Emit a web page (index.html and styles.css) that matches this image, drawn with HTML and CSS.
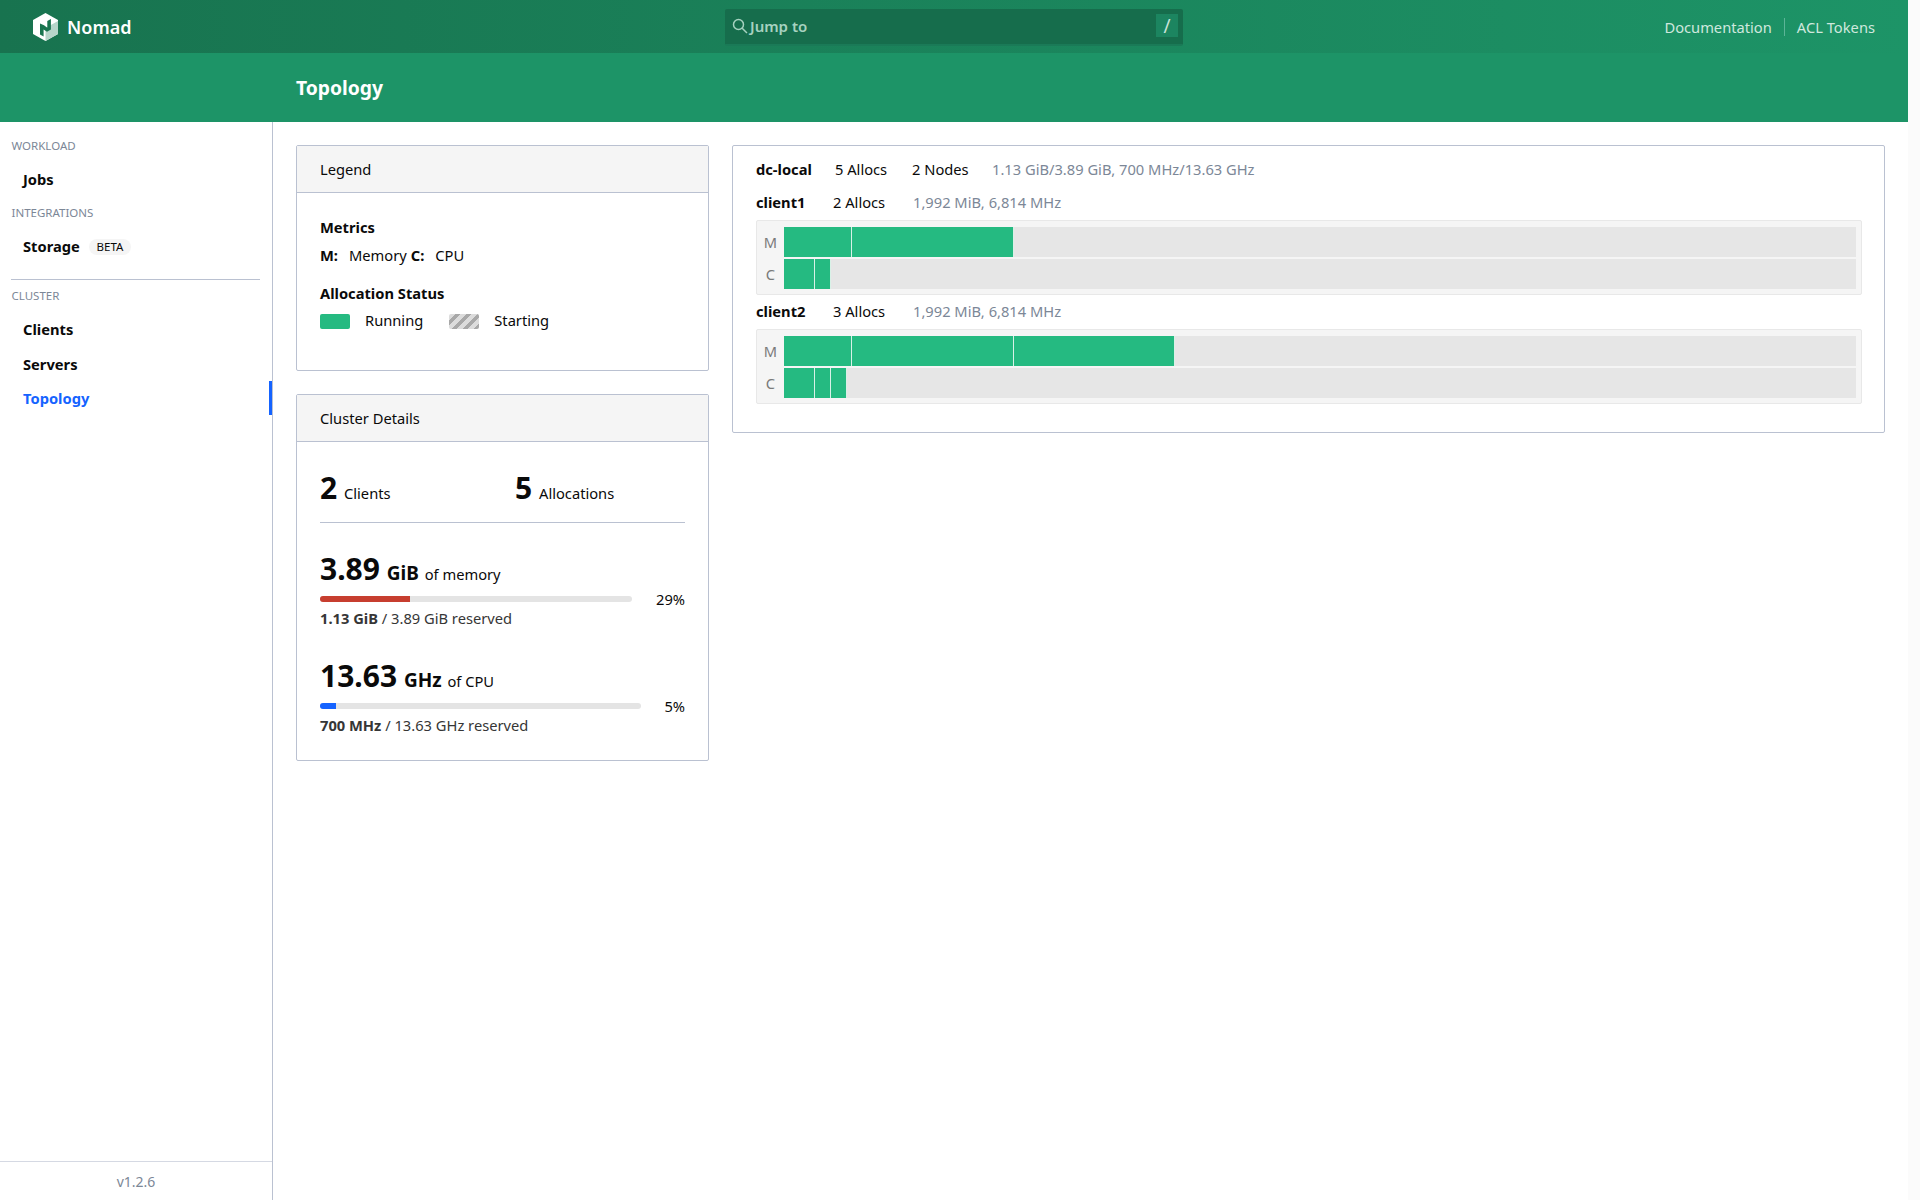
FILE: index.html
```html
<!DOCTYPE html>
<html lang="en">
<head>
    <meta charset="UTF-8">
    <title>Topology - Nomad</title>
    <link rel="stylesheet" href="styles.css">
</head>
<body>
<div class="page">
    <nav class="navbar">
        <a class="brand">
            <svg class="logo" viewBox="0 0 25 28" width="25" height="28">
                <path fill="#fff" d="M12.5 0 25 7v14l-12.5 7L0 21V7z"/>
                <path fill="#b7d5ca" d="M12.5 28V15L25 8v13z"/>
                <path fill="#19744f" d="M7 10.5v11l3.6 2.1v-7.2l3.4 2.4 3.9-2.2V6l-3.6 2.1v6.6l-3.3-2.4z"/>
            </svg>
            <span class="brand-name">Nomad</span>
        </a>
        <div class="search">
            <svg class="search-icon" viewBox="0 0 16 16" width="16" height="16">
                <circle cx="6.5" cy="6.5" r="5" fill="none" stroke="currentColor" stroke-width="1.5"/>
                <path d="M10.2 10.2 15 15" stroke="currentColor" stroke-width="1.5"/>
            </svg>
            <span class="search-text">Jump to</span>
            <span class="search-key">/</span>
        </div>
        <div class="nav-links">
            <a class="nav-link">Documentation</a>
            <a class="nav-link">ACL Tokens</a>
        </div>
    </nav>
    <header class="subnav">
        <h1>Topology</h1>
    </header>
    <div class="content">
        <aside class="sidebar">
            <p class="menu-label">WORKLOAD</p>
            <ul class="menu-list">
                <li class="menu-item">Jobs</li>
            </ul>
            <p class="menu-label">INTEGRATIONS</p>
            <ul class="menu-list">
                <li class="menu-item">Storage <span class="beta">BETA</span></li>
            </ul>
            <hr class="menu-divider">
            <p class="menu-label">CLUSTER</p>
            <ul class="menu-list">
                <li class="menu-item">Clients</li>
                <li class="menu-item">Servers</li>
                <li class="menu-item active">Topology</li>
            </ul>
            <div class="version">v1.2.6</div>
        </aside>
        <main class="main">
            <div class="left-col">
                <section class="card">
                    <div class="card-head">Legend</div>
                    <div class="legend-body">
                        <h3>Metrics</h3>
                        <div class="legend-metrics">
                            <strong>M:</strong><span class="metric-name">Memory</span>
                            <strong>C:</strong><span class="metric-name">CPU</span>
                        </div>
                        <h3 class="status-title">Allocation Status</h3>
                        <div class="legend-status">
                            <span class="swatch running"></span><span class="status-name">Running</span>
                            <span class="swatch starting"></span><span class="status-name">Starting</span>
                        </div>
                    </div>
                </section>
                <section class="card">
                    <div class="card-head">Cluster Details</div>
                    <div class="details-body">
                        <div class="counts">
                            <div class="count first"><b>2</b> Clients</div>
                            <div class="count"><b>5</b> Allocations</div>
                        </div>
                        <div class="resource">
                            <h2><b>3.89</b> <em>GiB</em> of memory</h2>
                            <div class="meter-row">
                                <div class="meter meter-mem"><div class="meter-fill red" style="width: 29%"></div></div>
                                <span>29%</span>
                            </div>
                            <p><strong>1.13 GiB</strong> / 3.89 GiB reserved</p>
                        </div>
                        <div class="resource">
                            <h2><b>13.63</b> <em>GHz</em> of CPU</h2>
                            <div class="meter-row">
                                <div class="meter meter-cpu"><div class="meter-fill blue" style="width: 5%"></div></div>
                                <span>5%</span>
                            </div>
                            <p><strong>700 MHz</strong> / 13.63 GHz reserved</p>
                        </div>
                    </div>
                </section>
            </div>
            <section class="card topo">
                <div class="topo-line dc">
                    <strong class="dc-name">dc-local</strong>
                    <span class="dc-allocs">5 Allocs</span>
                    <span class="dc-nodes">2 Nodes</span>
                    <span class="muted">1.13 GiB/3.89 GiB, 700 MHz/13.63 GHz</span>
                </div>
                <div class="topo-line">
                    <strong class="node-name">client1</strong>
                    <span class="node-allocs">2 Allocs</span>
                    <span class="muted">1,992 MiB, 6,814 MHz</span>
                </div>
                <div class="chart">
                    <div class="chart-row">
                        <span class="chart-label">M</span>
                        <div class="track">
                            <div class="alloc" style="width: 6.36%"></div>
                            <div class="alloc" style="width: 15.08%"></div>
                        </div>
                    </div>
                    <div class="chart-row">
                        <span class="chart-label">C</span>
                        <div class="track">
                            <div class="alloc" style="width: 2.85%"></div>
                            <div class="alloc" style="width: 1.5%"></div>
                        </div>
                    </div>
                </div>
                <div class="topo-line">
                    <strong class="node-name">client2</strong>
                    <span class="node-allocs">3 Allocs</span>
                    <span class="muted">1,992 MiB, 6,814 MHz</span>
                </div>
                <div class="chart">
                    <div class="chart-row">
                        <span class="chart-label">M</span>
                        <div class="track">
                            <div class="alloc" style="width: 6.36%"></div>
                            <div class="alloc" style="width: 15.08%"></div>
                            <div class="alloc" style="width: 15.08%"></div>
                        </div>
                    </div>
                    <div class="chart-row">
                        <span class="chart-label">C</span>
                        <div class="track">
                            <div class="alloc" style="width: 2.85%"></div>
                            <div class="alloc" style="width: 1.5%"></div>
                            <div class="alloc" style="width: 1.5%"></div>
                        </div>
                    </div>
                </div>
            </section>
        </main>
    </div>
</div>
</body>
</html>
```

FILE: styles.css
```css
* {
    box-sizing: border-box;
}
body {
    margin: 0;
    background-color: #fbfbfb;
    font-family: "Noto Sans", sans-serif;
    font-size: 14.7px;
    line-height: 22px;
    color: #0a0a0a;
}
.page {
    width: 1908px;
    height: 1200px;
    display: flex;
    flex-direction: column;
    background-color: #fff;
}

/* top bar */
.navbar {
    height: 53px;
    display: flex;
    align-items: center;
    position: relative;
    background: linear-gradient(to right, #18734f, #1d9467);
}
.brand {
    display: flex;
    align-items: center;
    margin-left: 33px;
    color: #fff;
}
.brand-name {
    margin-left: 9px;
    font-size: 18px;
    font-weight: 600;
}
.search {
    position: absolute;
    left: 725px;
    top: 9px;
    width: 458px;
    height: 37px;
    padding: 0 5px 2px 7px;
    display: flex;
    align-items: center;
    background-color: #166d4c;
    border-bottom: 2px solid #1a7a57;
    border-radius: 2px;
    color: #a6d2c0;
}
.search-text {
    margin-left: 2px;
    font-size: 15px;
    font-weight: 600;
}
.search-key {
    margin-left: auto;
    width: 22px;
    height: 23px;
    line-height: 24px;
    text-align: center;
    font-size: 19px;
    background-color: #1c8560;
    color: #c8e3d8;
}
.nav-links {
    margin-left: auto;
    margin-right: 33px;
    display: flex;
    align-items: center;
}
.nav-link {
    color: #cfe8de;
}
.nav-link + .nav-link {
    margin-left: 12px;
    padding-left: 12px;
    border-left: 1px solid #5cb497;
    line-height: 18px;
}

.subnav {
    height: 69px;
    padding-left: 296px;
    display: flex;
    align-items: center;
    background-color: #1d9467;
}
.subnav h1 {
    margin: 0;
    font-size: 19.3px;
    font-weight: 700;
    color: #fff;
}

.content {
    flex: 1;
    display: flex;
}

/* sidebar */
.sidebar {
    width: 273px;
    padding-top: 14px;
    display: flex;
    flex-direction: column;
    border-right: 1px solid #bac1d1;
}
.menu-label {
    margin: 0 0 0 11.5px;
    height: 20px;
    line-height: 20px;
    font-size: 11.5px;
    color: #7c8797;
}
.menu-list {
    list-style: none;
    margin: 7px 0 6px 11px;
    padding: 0;
}
.menu-item {
    height: 34px;
    line-height: 33px;
    padding-left: 12px;
    font-weight: 700;
}
.menu-item + .menu-item {
    line-height: 34px;
}
.menu-item.active {
    line-height: 35px;
    color: #1563ff;
    border-right: 3px solid #1563ff;
}
.beta {
    display: inline-block;
    margin-left: 5px;
    padding: 0 8px;
    height: 16px;
    line-height: 16px;
    border-radius: 8px;
    background-color: #f5f5f5;
    font-size: 11.5px;
    font-weight: 400;
    vertical-align: 1px;
}
.menu-divider {
    margin: 9px 12px 6px 11px;
    border: 0;
    border-top: 1px solid #bac1d1;
}
.version {
    margin-top: auto;
    height: 39px;
    line-height: 40px;
    text-align: center;
    font-size: 14px;
    color: #7c8797;
    border-top: 1px solid #d5d9e3;
}

/* main area */
.main {
    flex: 1;
    padding: 23px 23px 0 23px;
    display: flex;
    align-items: flex-start;
    gap: 23px;
}
.left-col {
    width: 413px;
    display: flex;
    flex-direction: column;
    gap: 23px;
}
.card {
    border: 1px solid #bac1d1;
    border-radius: 2px;
}
.card-head {
    height: 47px;
    line-height: 46px;
    padding-left: 23px;
    background-color: #f5f5f5;
    border-bottom: 1px solid #bac1d1;
}

/* legend */
.legend-body {
    padding: 23px 23px 39px;
}
.legend-body h3 {
    margin: 0;
    font-size: 14.7px;
    font-weight: 700;
}
.legend-metrics {
    margin-top: 6px;
    display: flex;
}
.metric-name {
    margin-left: 11px;
    margin-right: 4px;
}
.status-title {
    margin-top: 16px !important;
}
.legend-status {
    margin-top: 5px;
    display: flex;
    align-items: center;
}
.swatch {
    width: 30px;
    height: 15px;
    margin-top: 2px;
    border-radius: 2px;
}
.running {
    background-color: #25ba81;
}
.starting {
    margin-left: 26px;
    background: repeating-linear-gradient(-45deg, #a8a8a8, #a8a8a8 4px, #dcdcdc 4px, #dcdcdc 7.8px);
}
.status-name {
    margin-left: 15px;
}

/* cluster details */
.details-body {
    padding: 24px 23px 24px;
}
.counts {
    display: flex;
    align-items: baseline;
    height: 57px;
    border-bottom: 1px solid #bac1d1;
    line-height: 44px;
}
.count.first {
    width: 195px;
}
.count b {
    margin-right: 3px;
    font-size: 30px;
    font-weight: 700;
}
.resource {
    margin-top: 29px;
}
.counts + .resource {
    margin-top: 28px;
}
.resource h2 {
    margin: 0;
    height: 38px;
    line-height: 35px;
    font-size: 14.7px;
    font-weight: 400;
}
.resource h2 b {
    font-size: 30px;
    font-weight: 700;
}
.resource h2 em {
    margin-left: 3px;
    margin-right: 2px;
    font-size: 19px;
    font-style: normal;
    font-weight: 700;
}
.meter-row {
    height: 20px;
    display: flex;
    align-items: center;
    justify-content: space-between;
}
.meter {
    height: 6px;
    border-radius: 3px;
    overflow: hidden;
    background-color: #e4e4e4;
}
.meter-mem {
    width: 312px;
}
.meter-cpu {
    width: 321px;
}
.meter-fill {
    height: 100%;
}
.red {
    background-color: #c73e2f;
}
.blue {
    background-color: #1563ff;
}
.resource p {
    margin: 0;
    height: 20px;
    line-height: 18px;
    color: #363636;
}

/* topology */
.topo {
    flex: 1;
    padding: 13px 22px 28px 23px;
}
.topo-line {
    height: 22px;
    line-height: 20px;
    display: flex;
    white-space: nowrap;
}
.topo-line.dc {
    margin-bottom: 11px;
}
.dc-name {
    width: 79px;
}
.dc-allocs {
    width: 77px;
}
.dc-nodes {
    width: 80px;
}
.node-name {
    width: 77px;
}
.node-allocs {
    width: 80px;
}
.muted {
    color: #7c8797;
}
.chart {
    margin: 6px 0;
    padding: 6px 5px 5px 0;
    height: 75px;
    display: flex;
    flex-direction: column;
    gap: 2px;
    background-color: #f5f5f5;
    border: 1px solid #e8e8e8;
    border-radius: 2px;
}
.chart:last-child {
    margin-bottom: 0;
}
.chart-row {
    height: 30px;
    display: flex;
    align-items: center;
}
.chart-label {
    width: 27px;
    line-height: 21px;
    text-align: center;
    color: #7a7a7a;
}
.track {
    flex: 1;
    height: 30px;
    display: flex;
    background-color: #e6e6e6;
}
.alloc {
    background-color: #25ba81;
    border-right: 1px solid #d9f1e7;
}
```
